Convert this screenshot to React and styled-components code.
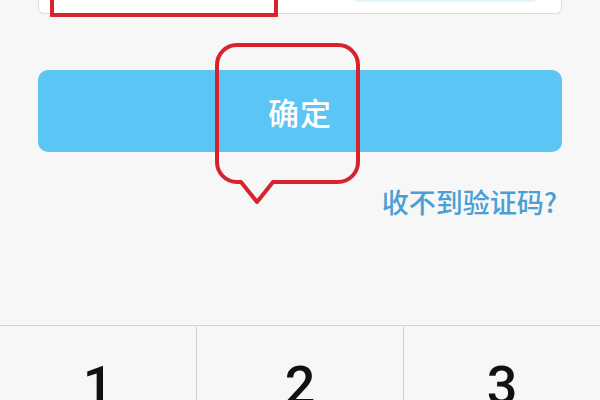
import React from "react";
import styled, { createGlobalStyle } from "styled-components";

const GlobalStyle = createGlobalStyle`
  html, body {
    margin: 0;
    padding: 0;
    background: #f7f7f7;
  }
  body {
    font-family: "Noto Sans CJK SC", "Noto Sans", sans-serif;
  }
`;

const Screen = styled.div`
  position: relative;
  width: 600px;
  height: 400px;
  overflow: hidden;
  background: #f7f7f7;
  display: flex;
  flex-direction: column;
`;

const InputCard = styled.div`
  height: 13px;
  margin: 0 38px;
  background: #fff;
  border: 1px solid #dcdcdc;
  border-top: none;
  border-radius: 0 0 6px 6px;
  display: flex;
  justify-content: flex-end;
  padding-right: 26px;
`;

const SendStrip = styled.div`
  width: 180px;
  height: 2px;
  background: #e3f5fc;
`;

const ConfirmButton = styled.button`
  margin: 56px 38px 0;
  height: 82px;
  border: none;
  border-radius: 10px;
  background: #5bc5f5;
  color: #fff;
  font-family: "Noto Sans CJK SC", sans-serif;
  font-size: 31px;
  font-weight: 500;
  letter-spacing: 1px;
  display: flex;
  align-items: center;
  justify-content: center;
  padding: 0;
`;

const HelpLink = styled.a`
  align-self: flex-end;
  margin: 32px 43px 0 0;
  color: #4a9fd6;
  font-size: 27px;
  font-weight: 500;
  line-height: 36px;
  text-decoration: none;
`;

const Keypad = styled.div`
  margin-top: auto;
  height: 74px;
  display: grid;
  grid-template-columns: 196px 207px 1fr;
  border-top: 1px solid #d2d2d2;
`;

const Key = styled.div`
  display: flex;
  justify-content: center;
  padding-top: 33px;
  font-family: Roboto, "Liberation Sans", Arial, sans-serif;
  font-size: 54px;
  font-weight: 500;
  line-height: 1;
  color: #111;
  border-left: ${(p) => (p.$first ? "none" : "1px solid #d2d2d2")};
`;

const Highlight = styled.div`
  position: absolute;
  left: 50px;
  top: -10px;
  width: 220px;
  height: 19px;
  border: 4px solid #d8232c;
  border-radius: 1px;
`;

const Bubble = styled.svg`
  position: absolute;
  left: 210px;
  top: 40px;
`;

const BubbleOutline = () => (
  <Bubble width="155" height="170" viewBox="0 0 155 170">
    <path
      d="M27 5 H128 A20 20 0 0 1 148 25 V122 A20 20 0 0 1 128 142 H63 L47 162 L31 142 H27 A20 20 0 0 1 7 122 V25 A20 20 0 0 1 27 5 Z"
      fill="none"
      stroke="#d8232c"
      strokeWidth="4"
      strokeLinejoin="round"
    />
  </Bubble>
);

export default function App() {
  return (
    <>
      <GlobalStyle />
      <Screen>
        <InputCard>
          <SendStrip />
        </InputCard>
        <ConfirmButton>确定</ConfirmButton>
        <HelpLink>收不到验证码?</HelpLink>
        <Keypad>
          {["1", "2", "3"].map((d, i) => (
            <Key key={d} $first={i === 0}>
              {d}
            </Key>
          ))}
        </Keypad>
        <Highlight />
        <BubbleOutline />
      </Screen>
    </>
  );
}
